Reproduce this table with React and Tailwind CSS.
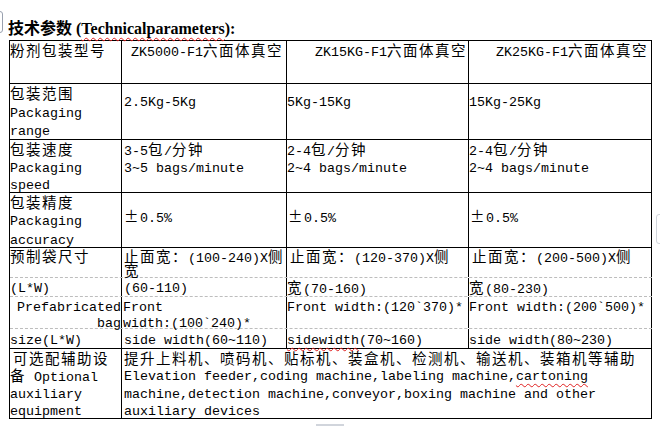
import React from "react";

const CJK = /[\u3000-\u9fff\uff00-\uffef\u00b1]/;

function T({ s, u }) {
  const parts = s.split(/([\u3000-\u9fff\uff00-\uffef\u00b1]+)/).filter((p) => p !== "");
  const out = parts.map((p, i) =>
    CJK.test(p) ? (
      <span key={i} className="font-['Noto_Sans_CJK_SC',sans-serif] text-[14.5px] tracking-[1.5px]">
        {p}
      </span>
    ) : (
      <span key={i} className="font-['Liberation_Mono',monospace] text-[13.33px] whitespace-pre">
        {p}
      </span>
    )
  );
  if (u)
    return (
      <span className="underline decoration-wavy decoration-[#e02020] decoration-1 underline-offset-[3px]">
        {out}
      </span>
    );
  return <>{out}</>;
}

function L({ children, h = "h-[17px] leading-[17px]", cls = "" }) {
  return <div className={`${h} whitespace-nowrap ${cls}`}>{children}</div>;
}

const W1 = "w-[112px] shrink-0 border-r border-black";
const W2 = "w-[165px] shrink-0 border-r border-black";
const W3 = "w-[182px] shrink-0 border-r border-black";
const W4 = "w-[183px] shrink-0 border-r border-black";

export default function App() {
  return (
    <div className="relative w-[660px] h-[427px] bg-white text-black overflow-hidden">
      {/* decorative marks */}
      <div className="absolute left-[-4px] top-[11px] w-[7px] h-[22px] border border-gray-400 rounded-[3px]" />
      <div className="absolute left-[656px] top-[214px] w-[8px] h-[30px] border border-gray-300 rounded-[3px]" />
      <div className="absolute left-[316px] top-[424px] w-[28px] h-[2px] bg-gray-300" />

      {/* title */}
      <div className="h-[40px] pt-[18px] pl-[8px] leading-[18px] whitespace-nowrap">
        <span className="font-['Noto_Sans_CJK_SC',sans-serif] font-bold text-[16px]">技术参数</span>
        <span className="font-['Liberation_Serif',serif] font-bold text-[16px]">
          {" ("}
          <span className="underline decoration-wavy decoration-[#e02020] decoration-1 underline-offset-[3px]">
            Technicalparameters
          </span>
          {"):"}
        </span>
      </div>

      {/* table */}
      <div className="ml-[9px] w-[643px] border-l border-t border-black">
        {/* header */}
        <div className="flex h-[43px] border-b border-black">
          <div className={W1}>
            <L h="h-[18px] leading-[18px]"><T s="粉剂包装型号" /></L>
          </div>
          <div className={`${W2} pr-[3px]`}>
            <L h="h-[18px] leading-[18px]" cls="text-right"><T s="ZK5000-F1六面体真空" /></L>
          </div>
          <div className={`${W3} pr-[1px]`}>
            <L h="h-[18px] leading-[18px]" cls="text-right"><T s="ZK15KG-F1六面体真空" /></L>
          </div>
          <div className={`${W4} pr-[3px]`}>
            <L h="h-[18px] leading-[18px]" cls="text-right"><T s="ZK25KG-F1六面体真空" /></L>
          </div>
        </div>

        {/* packaging range */}
        <div className="flex h-[56px] border-b border-black">
          <div className={W1}>
            <L h="h-[18px] leading-[18px]"><T s="包装范围" /></L>
            <L h="h-[18px] leading-[18px]"><T s="Packaging" /></L>
            <L h="h-[18px] leading-[18px]"><T s="range" /></L>
          </div>
          <div className={`${W2} pl-[2px] pt-[7px]`}>
            <L h="h-[18px] leading-[18px]"><T s="2.5Kg-5Kg" /></L>
          </div>
          <div className={`${W3} pt-[7px]`}>
            <L h="h-[18px] leading-[18px]"><T s="5Kg-15Kg" /></L>
          </div>
          <div className={`${W4} pt-[7px]`}>
            <L h="h-[18px] leading-[18px]"><T s="15Kg-25Kg" /></L>
          </div>
        </div>

        {/* packaging speed */}
        <div className="flex h-[53px] border-b border-black">
          <div className={W1}>
            <L h="h-[17.5px] leading-[17.5px]"><T s="包装速度" /></L>
            <L h="h-[17.5px] leading-[17.5px]"><T s="Packaging" /></L>
            <L h="h-[17px] leading-[17px]"><T s="speed" /></L>
          </div>
          <div className={`${W2} pl-[2px]`}>
            <L h="h-[17.5px] leading-[17.5px]"><T s="3-5包/分钟" /></L>
            <L h="h-[17.5px] leading-[17.5px]"><T s="3~5 bags/minute" /></L>
          </div>
          <div className={W3}>
            <L h="h-[17.5px] leading-[17.5px]"><T s="2-4包/分钟" /></L>
            <L h="h-[17.5px] leading-[17.5px]"><T s="2~4 bags/minute" /></L>
          </div>
          <div className={W4}>
            <L h="h-[17.5px] leading-[17.5px]"><T s="2-4包/分钟" /></L>
            <L h="h-[17.5px] leading-[17.5px]"><T s="2~4 bags/minute" /></L>
          </div>
        </div>

        {/* packaging accuracy */}
        <div className="flex h-[55px] border-b border-black">
          <div className={W1}>
            <L h="h-[17px] leading-[17px]"><T s="包装精度" /></L>
            <L h="h-[18.5px] leading-[18.5px]"><T s="Packaging" /></L>
            <L h="h-[18px] leading-[18px]"><T s="accuracy" /></L>
          </div>
          <div className={`${W2} pl-[2px] pt-[14px]`}>
            <L h="h-[18px] leading-[18px]"><T s="±0.5%" /></L>
          </div>
          <div className={`${W3} pl-[1px] pt-[14px]`}>
            <L h="h-[18px] leading-[18px]"><T s="±0.5%" /></L>
          </div>
          <div className={`${W4} pl-[1px] pt-[14px]`}>
            <L h="h-[18px] leading-[18px]"><T s="±0.5%" /></L>
          </div>
        </div>

        {/* prefabricated bag size: sub a */}
        <div className="flex h-[30px] border-b border-dashed border-b-[#bdbdbd]">
          <div className={W1}>
            <L h="h-[15px] leading-[15px]"><T s="预制袋尺寸" /></L>
          </div>
          <div className={`${W2} pl-[2px]`}>
            <L h="h-[15px] leading-[15px]"><T s="止面宽：(100-240)X侧" /></L>
            <L h="h-[14px] leading-[14px]"><T s="宽" /></L>
          </div>
          <div className={`${W3} pl-[3px]`}>
            <L h="h-[15px] leading-[15px]"><T s="止面宽：(120-370)X侧" /></L>
          </div>
          <div className={`${W4} pl-[3px]`}>
            <L h="h-[15px] leading-[15px]"><T s="止面宽：(200-500)X侧" /></L>
          </div>
        </div>

        {/* sub b */}
        <div className="flex h-[19px] border-b border-dashed border-b-[#bdbdbd]">
          <div className={W1}>
            <L><T s="(L*W)" /></L>
          </div>
          <div className={`${W2} pl-[2px]`}>
            <L><T s="(60-110)" /></L>
          </div>
          <div className={W3}>
            <L><T s="宽(70-160)" /></L>
          </div>
          <div className={W4}>
            <L><T s="宽(80-230)" /></L>
          </div>
        </div>

        {/* sub c */}
        <div className="flex h-[32px] border-b border-dashed border-b-[#bdbdbd]">
          <div className={W1}>
            <L h="h-[16px] leading-[16px]" cls="text-right"><T s="Prefabricated" /></L>
            <L h="h-[16px] leading-[16px]" cls="text-right"><T s="bag" /></L>
          </div>
          <div className={`${W2} pl-[1px]`}>
            <L h="h-[16px] leading-[16px]"><T s="Front" /></L>
            <L h="h-[16px] leading-[16px]"><T s="width:(100`240)*" /></L>
          </div>
          <div className={W3}>
            <L h="h-[16px] leading-[16px]"><T s="Front width:(120`370)*" /></L>
          </div>
          <div className={W4}>
            <L h="h-[16px] leading-[16px]"><T s="Front width:(200`500)*" /></L>
          </div>
        </div>

        {/* sub d */}
        <div className="flex h-[20px] border-b border-black">
          <div className={W1}>
            <L h="h-[19px] leading-[19px]"><T s="size(L*W)" /></L>
          </div>
          <div className={`${W2} pl-[2px]`}>
            <L h="h-[19px] leading-[19px]"><T s="side width(60~110)" /></L>
          </div>
          <div className={W3}>
            <L h="h-[19px] leading-[19px]">
              <T s="sidewidth" u />
              <T s="(70~160)" />
            </L>
          </div>
          <div className={W4}>
            <L h="h-[19px] leading-[19px]"><T s="side width(80~230)" /></L>
          </div>
        </div>

        {/* optional auxiliary equipment */}
        <div className="flex h-[70px] border-b border-black">
          <div className={W1}>
            <L h="h-[17.3px] leading-[17.3px]" cls="pl-[3px]"><T s="可选配辅助设" /></L>
            <L h="h-[17.3px] leading-[17.3px]"><T s="备 Optional" /></L>
            <L h="h-[17.3px] leading-[17.3px]"><T s="auxiliary" /></L>
            <L h="h-[17.3px] leading-[17.3px]"><T s="equipment" /></L>
          </div>
          <div className="w-[530px] shrink-0 border-r border-black pl-[2px]">
            <L h="h-[17.3px] leading-[17.3px]">
              <T s="提升上料机、喷码机、贴标机、装盒机、检测机、输送机、装箱机等辅助" />
            </L>
            <L h="h-[17.3px] leading-[17.3px]">
              <T s="Elevation feeder,coding machine,labeling machine," />
              <T s="cartoning" u />
            </L>
            <L h="h-[17.3px] leading-[17.3px]">
              <T s="machine,detection machine,conveyor,boxing machine and other" />
            </L>
            <L h="h-[17.3px] leading-[17.3px]">
              <T s="auxiliary devices" />
            </L>
          </div>
        </div>
      </div>
    </div>
  );
}
